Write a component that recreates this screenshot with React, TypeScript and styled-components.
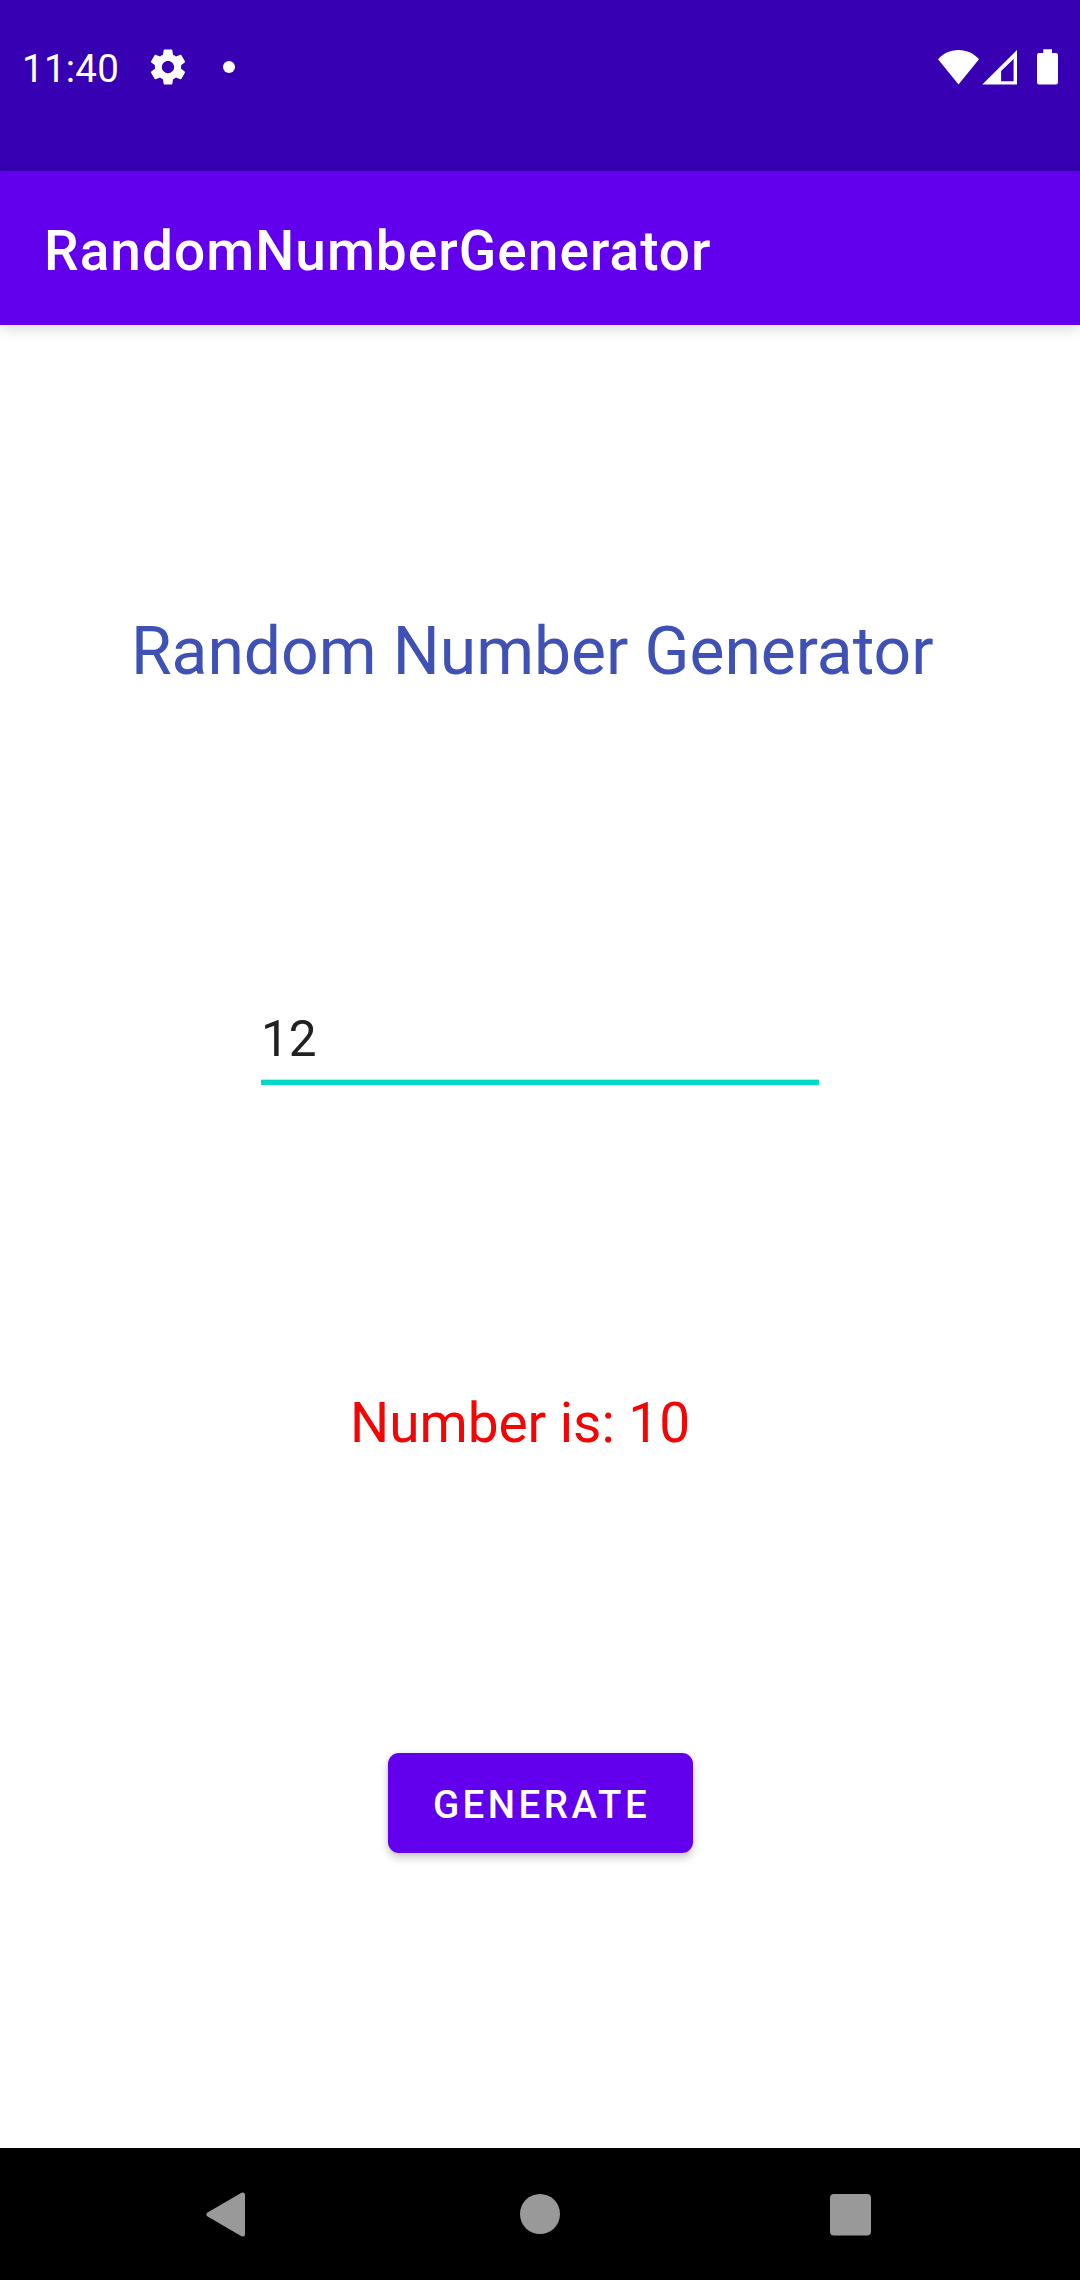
import React, { useState } from "react";
import styled, { createGlobalStyle } from "styled-components";

const GlobalStyle = createGlobalStyle`
  *, *::before, *::after { box-sizing: border-box; }
  body {
    margin: 0;
    background: #ffffff;
    font-family: Roboto, "Noto Sans", sans-serif;
  }
`;

const Screen = styled.div`
  display: flex;
  flex-direction: column;
  width: 1080px;
  height: 2280px;
  overflow: hidden;
  background: #ffffff;
`;

const StatusBar = styled.header`
  display: flex;
  justify-content: space-between;
  align-items: flex-start;
  flex: none;
  height: 171px;
  padding: 46px 21px 0 22px;
  background: #3700b3;
  color: #ffffff;
`;

const StatusGroup = styled.div`
  display: flex;
  align-items: center;
  height: 42px;
`;

const Clock = styled.time`
  width: 125px;
  padding-top: 4px;
  font-size: 38.5px;
  line-height: 46px;
  letter-spacing: 0.25px;
  white-space: nowrap;
`;

const StatusIcon = styled.svg<{ $gap?: number }>`
  display: block;
  flex: none;
  margin-left: ${({ $gap = 0 }) => $gap}px;
  fill: #ffffff;
`;

const NotificationDot = styled.span`
  width: 12px;
  height: 12px;
  margin-left: 34px;
  border-radius: 50%;
  background: #ffffff;
`;

const AppBar = styled.div`
  display: flex;
  align-items: center;
  flex: none;
  height: 154px;
  padding: 6px 44px 0;
  background: #6200ee;
  box-shadow: 0 4px 14px rgba(0, 0, 0, 0.14);
`;

const AppTitle = styled.h1`
  margin: 0;
  font-size: 55px;
  font-weight: 500;
  line-height: 64px;
  letter-spacing: 0.0189em;
  color: #ffffff;
  white-space: nowrap;
`;

const Content = styled.main`
  display: flex;
  flex: 1;
  flex-direction: column;
  align-items: flex-start;
  padding: 288px 0 0;
`;

const Heading = styled.h2`
  margin: 0 0 0 131px;
  font-size: 66px;
  font-weight: 400;
  line-height: 78px;
  letter-spacing: -0.05px;
  color: #3f51b5;
  white-space: nowrap;
`;

const NumberField = styled.input`
  width: 558px;
  height: 84px;
  margin: 310px 0 0 261px;
  padding: 0 0 3px;
  border: 0;
  border-bottom: 5px solid #03dac5;
  border-radius: 0;
  outline: 0;
  background: transparent;
  box-shadow: inset 0 -1px 0 rgba(3, 218, 197, 0.35);
  font: 400 49.5px/58px Roboto, "Noto Sans", sans-serif;
  color: #212121;
`;

const Result = styled.p`
  margin: 305px 0 0 350px;
  font-size: 55px;
  line-height: 66px;
  letter-spacing: -0.05px;
  color: #f20505;
  white-space: nowrap;
`;

const GenerateButton = styled.button`
  width: 305px;
  height: 100px;
  margin: 297px 0 0 388px;
  padding: 4px 0 0 2px;
  border: 0;
  border-radius: 11px;
  background: #6200ee;
  box-shadow: 0 5px 8px rgba(0, 0, 0, 0.2), 0 0 5px rgba(0, 0, 0, 0.08);
  font: 500 38.5px/46px Roboto, "Noto Sans", sans-serif;
  letter-spacing: 0.0893em;
  text-transform: uppercase;
  color: #ffffff;
`;

const NavigationBar = styled.nav`
  display: flex;
  justify-content: space-between;
  align-items: center;
  flex: none;
  height: 132px;
  padding: 0 199px;
  background: #000000;
`;

const NavButton = styled.button`
  display: grid;
  width: 60px;
  height: 60px;
  padding: 0;
  border: 0;
  background: transparent;
`;

const NavIcon = styled.svg`
  display: block;
  fill: #999999;
`;

function App() {
  const [limit, setLimit] = useState("12");
  const [result, setResult] = useState(10);

  const generate = () => {
    const max = Number.parseInt(limit, 10);
    if (max > 0) setResult(Math.floor(Math.random() * max));
  };

  return (
    <>
      <GlobalStyle />
      <Screen>
        <StatusBar>
          <StatusGroup>
            <Clock>11:40</Clock>
            <StatusIcon width="42" height="42" viewBox="0 0 24 24">
              <path d="M19.43 12.98c.04-.32.07-.64.07-.98s-.03-.66-.07-.98l2.11-1.65c.19-.15.24-.42.12-.64l-2-3.46c-.12-.22-.39-.3-.61-.22l-2.49 1c-.52-.4-1.08-.73-1.69-.98l-.38-2.65C14.46 2.18 14.25 2 14 2h-4c-.25 0-.46.18-.49.42l-.38 2.65c-.61.25-1.17.59-1.69.98l-2.49-1c-.23-.09-.49 0-.61.22l-2 3.46c-.13.22-.07.49.12.64l2.11 1.65c-.04.32-.07.65-.07.98s.03.66.07.98l-2.11 1.65c-.19.15-.24.42-.12.64l2 3.46c.12.22.39.3.61.22l2.49-1c.52.4 1.08.73 1.69.98l.38 2.65c.03.24.24.42.49.42h4c.25 0 .46-.18.49-.42l.38-2.65c.61-.25 1.17-.59 1.69-.98l2.49 1c.23.09.49 0 .61-.22l2-3.46c.12-.22.07-.49-.12-.64l-2.11-1.65zM12 15.5c-1.93 0-3.5-1.57-3.5-3.5s1.57-3.5 3.5-3.5 3.5 1.57 3.5 3.5-1.57 3.5-3.5 3.5z" />
            </StatusIcon>
            <NotificationDot />
          </StatusGroup>
          <StatusGroup>
            <StatusIcon width="42" height="36" viewBox="0 0 42 36">
              <path d="M20.5 35.5 0 10.3C5 4.5 12 1 20.5 1S36 4.5 41 10.3Z" />
            </StatusIcon>
            <StatusIcon $gap={2} width="36" height="36" viewBox="0 0 36 36">
              <path fillRule="evenodd" d="M35 1V35.600H0.300ZM31.600 10 19.100 22V32.200H31.600Z" />
            </StatusIcon>
            <StatusIcon $gap={19} width="22" height="36" viewBox="0 0 22 36">
              <path d="M6.300 0.300H15V4H19a2 2 0 0 1 2 2V33.500a2 2 0 0 1-2 2H2a2 2 0 0 1-2-2V6a2 2 0 0 1 2-2H6.300Z" />
            </StatusIcon>
          </StatusGroup>
        </StatusBar>

        <AppBar>
          <AppTitle>RandomNumberGenerator</AppTitle>
        </AppBar>

        <Content>
          <Heading>Random Number Generator</Heading>
          <NumberField
            inputMode="numeric"
            value={limit}
            onChange={(event) => setLimit(event.target.value)}
          />
          <Result>Number is: {result}</Result>
          <GenerateButton type="button" onClick={generate}>
            Generate
          </GenerateButton>
        </Content>

        <NavigationBar>
          <NavButton type="button">
            <NavIcon width="60" height="60" viewBox="0 0 60 60">
              <path d="M42.5 8.7 8.6 28.500Q6 30.500 8.6 32.500L42.500 52.200Q46 53.500 46 50V11Q46 7.500 42.500 8.700Z" />
            </NavIcon>
          </NavButton>
          <NavButton type="button">
            <NavIcon width="60" height="60" viewBox="0 0 60 60">
              <circle cx="30" cy="30" r="20" />
            </NavIcon>
          </NavButton>
          <NavButton type="button">
            <NavIcon width="60" height="60" viewBox="0 0 60 60">
              <rect x="9" y="10" width="41" height="41.5" rx="4" />
            </NavIcon>
          </NavButton>
        </NavigationBar>
      </Screen>
    </>
  );
}

export default App;
